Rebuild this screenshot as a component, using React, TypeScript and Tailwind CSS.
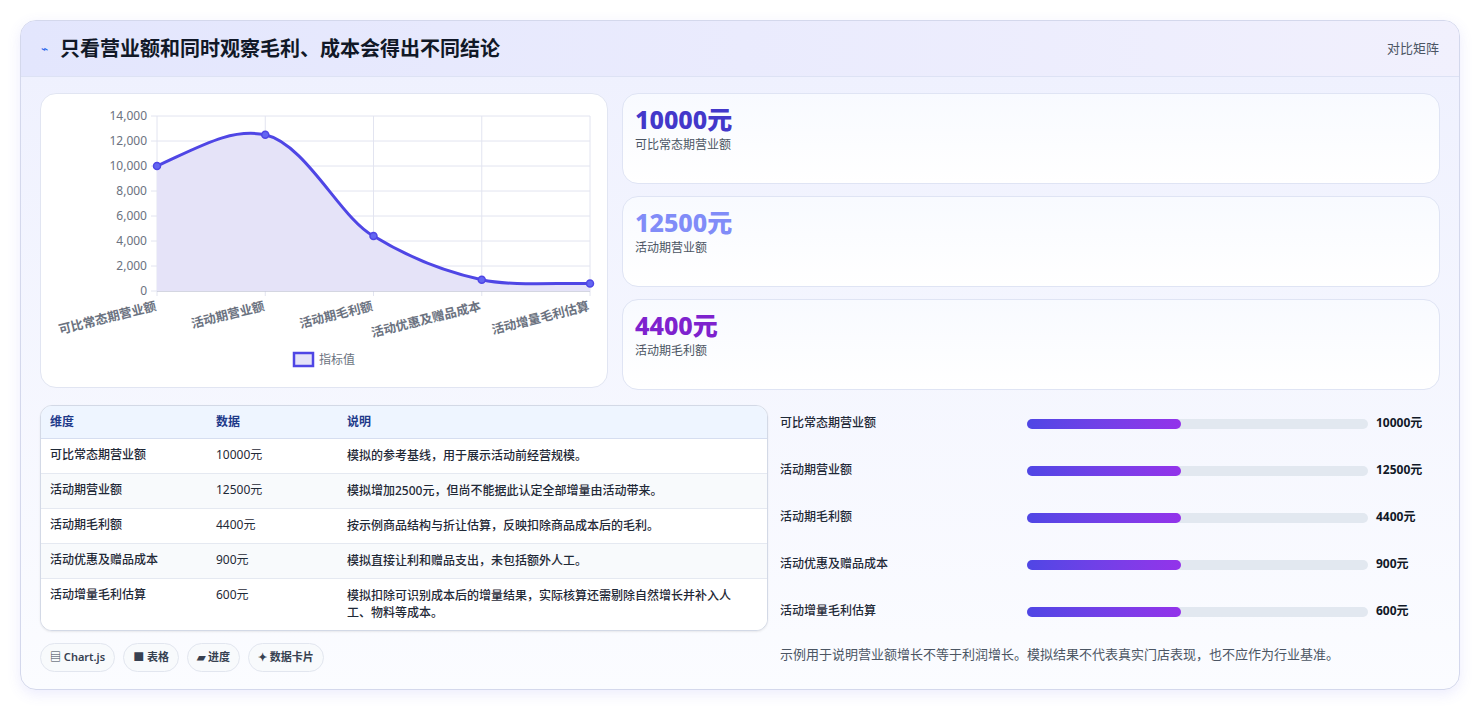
import React from "react";

const font = { fontFamily: '"Noto Sans", "Noto Sans CJK SC", sans-serif' };

const rows = [
  ["可比常态期营业额", "10000元", "模拟的参考基线，用于展示活动前经营规模。"],
  ["活动期营业额", "12500元", "模拟增加2500元，但尚不能据此认定全部增量由活动带来。"],
  ["活动期毛利额", "4400元", "按示例商品结构与折让估算，反映扣除商品成本后的毛利。"],
  ["活动优惠及赠品成本", "900元", "模拟直接让利和赠品支出，未包括额外人工。"],
  ["活动增量毛利估算", "600元", "模拟扣除可识别成本后的增量结果，实际核算还需剔除自然增长并补入人工、物料等成本。"],
];

function Chart() {
  const xs = [116, 224.25, 332.5, 440.75, 549];
  const vals = [10000, 12500, 4400, 900, 600];
  const ys = vals.map((v) => 197 - (v / 14000) * 175);
  const labels = ["可比常态期营业额", "活动期营业额", "活动期毛利额", "活动优惠及赠品成本", "活动增量毛利估算"];
  const line =
    "M116,72 C160,52 190,34 224.25,40.75 C265,50 300,125 332.5,142 C370,165 405,178 440.75,185.75 C470,192 510,189 549,189.5";
  return (
    <svg width="568" height="294" className="block">
      {[0, 2000, 4000, 6000, 8000, 10000, 12000, 14000].map((v) => {
        const y = 197 - (v / 14000) * 175;
        return (
          <g key={v}>
            <line x1="110" x2="549" y1={y} y2={y} stroke="#e2e4f0" />
            <text x="106" y={y + 4} textAnchor="end" fontSize="12" fill="#6b7280" style={font}>
              {v.toLocaleString("en-US")}
            </text>
          </g>
        );
      })}
      {xs.map((x) => (
        <line key={x} x1={x} x2={x} y1="22" y2="202" stroke="#e2e4f0" />
      ))}
      <line x1="116" x2="549" y1="197" y2="197" stroke="#b8bccc" />
      <path d={line + " L549,197 L116,197 Z"} fill="#e5e3f8" />
      <path d={line} fill="none" stroke="#4f46e5" strokeWidth="3" />
      {xs.map((x, i) => (
        <circle key={i} cx={x} cy={ys[i]} r="3.5" fill="#6366f1" stroke="#4f46e5" strokeWidth="1.5" />
      ))}
      {labels.map((l, i) => (
        <text
          key={l}
          x={xs[i]}
          y="216"
          textAnchor="end"
          fontSize="12.5"
          fontWeight="600"
          fill="#6b7280"
          transform={`rotate(-14 ${xs[i]} 216)`}
          style={font}
        >
          {l}
        </text>
      ))}
      <rect x="253" y="259" width="19" height="13" fill="#e5e3f8" stroke="#4f46e5" strokeWidth="2.5" />
      <text x="278" y="270" fontSize="12" fill="#6b7280" style={font}>指标值</text>
    </svg>
  );
}

export default function App() {
  const stats = [
    ["10000元", "可比常态期营业额", "text-[#4338ca]"],
    ["12500元", "活动期营业额", "text-[#818cf8]"],
    ["4400元", "活动期毛利额", "text-[#7e22ce]"],
  ];
  return (
    <div className="w-[1480px] h-[712px] bg-white pt-5 px-5" style={font}>
      <div className="h-[670px] rounded-2xl border border-[#d4d8ec] bg-gradient-to-b from-[#eef0fe] to-[#fbfcff] shadow-[0_4px_14px_rgba(99,102,241,0.12)] overflow-hidden">
        <div className="h-14 flex items-center justify-between px-5 bg-gradient-to-r from-[#e3e6fd] to-[#f1f0fd] border-b border-[#dde2f4]">
          <div className="flex items-center gap-3">
            <span className="text-[#2563eb] text-xs">⌁</span>
            <h1 className="text-[20px] font-bold text-[#111827]">只看营业额和同时观察毛利、成本会得出不同结论</h1>
          </div>
          <span className="text-[13px] text-[#4b5563]">对比矩阵</span>
        </div>
        <div className="px-[19px] pt-4 grid grid-cols-[568px_1fr] gap-[14px]">
          <div className="h-[295px] rounded-2xl bg-white border border-[#e1e5f2]">
            <Chart />
          </div>
          <div className="flex flex-col gap-3">
            {stats.map(([v, l, c]) => (
              <div key={l} className="h-[91px] rounded-2xl border border-[#dfe4f4] bg-gradient-to-b from-[#f8faff] to-white px-[12px] pt-[9px]">
                <div className={`text-[25px] font-extrabold leading-8 ${c}`}>{v}</div>
                <div className="text-xs text-[#4b5563] mt-0.5">{l}</div>
              </div>
            ))}
          </div>
        </div>
        <div className="px-[19px] pt-[15px] grid grid-cols-[728px_1fr] gap-3">
          <div>
            <div className="rounded-xl border border-[#d3d9e6] overflow-hidden bg-white shadow-[0_1px_2px_rgba(0,0,0,0.08)]">
              <table className="w-full text-xs text-[#1f2937]">
                <thead>
                  <tr className="bg-[#eef5ff] text-[#1e3a8a] font-semibold h-[32px] border-b border-[#d6def0]">
                    <td className="pl-[9px] w-[175px]">维度</td>
                    <td className="w-[131px]">数据</td>
                    <td>说明</td>
                  </tr>
                </thead>
                <tbody>
                  {rows.map((r, i) => (
                    <tr key={i} className={`border-t border-[#e5e9f1] align-top ${i % 2 ? "bg-[#f8fafc]" : "bg-white"}`}>
                      <td className="pl-[9px] pt-[8px] pb-[9px] font-medium">{r[0]}</td>
                      <td className="pt-[8px] pb-[9px]">{r[1]}</td>
                      <td className="pt-[8px] pb-[9px] pr-6 leading-[17px] font-medium">{r[2]}</td>
                    </tr>
                  ))}
                </tbody>
              </table>
            </div>
            <div className="flex gap-2 mt-3">
              {["▤ Chart.js", "■ 表格", "▰ 进度", "✦ 数据卡片"].map((t) => (
                <span key={t} className="h-[29px] px-[9px] flex items-center rounded-full border border-[#e2e6ef] bg-[#f8fafc] text-[11px] font-semibold text-[#374151]">
                  {t}
                </span>
              ))}
            </div>
          </div>
          <div className="pt-[8px]">
            {rows.map((r, i) => (
              <div key={i} className="h-[47px] flex items-start pt-[2px]">
                <span className="w-[247px] text-xs font-medium text-[#1f2937]">{r[0]}</span>
                <div className="w-[341px] h-[10px] mt-[4px] rounded-full bg-[#e2e8f0]">
                  <div className="w-[154px] h-full rounded-full bg-gradient-to-r from-[#4f46e5] to-[#9333ea]" />
                </div>
                <span className="ml-2 text-xs font-bold text-[#111827]">{r[1]}</span>
              </div>
            ))}
            <p className="text-[13px] text-[#4b5563] mt-[-3px]">示例用于说明营业额增长不等于利润增长。模拟结果不代表真实门店表现，也不应作为行业基准。</p>
          </div>
        </div>
      </div>
    </div>
  );
}
